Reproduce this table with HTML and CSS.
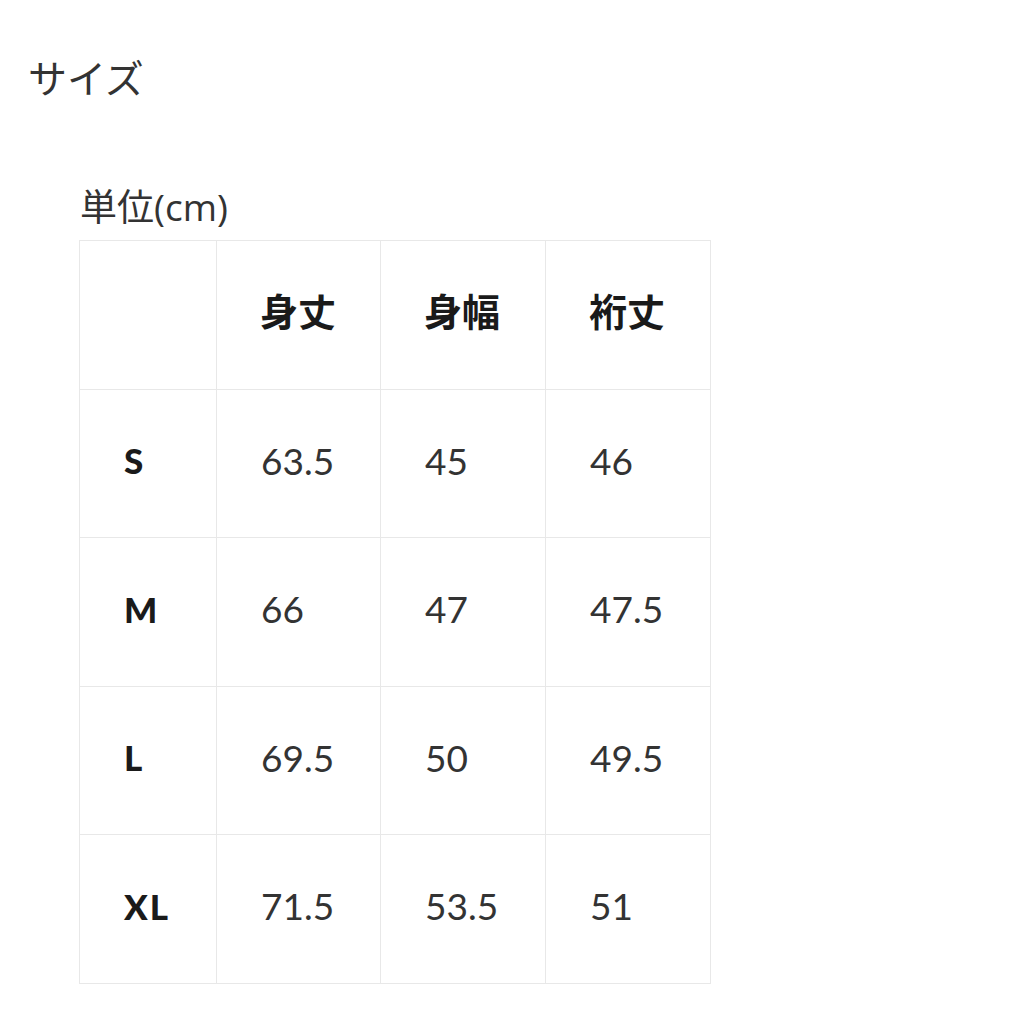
FILE: index.html
```html
<!DOCTYPE html>
<html lang="ja">
<head>
<meta charset="utf-8">
<link rel="stylesheet" href="styles.css">
</head>
<body>
<div class="page">
  <h1 class="title">サイズ</h1>
  <div class="unit">単位(cm)</div>
  <table class="size-table">
    <tr class="head">
      <td></td><td>身丈</td><td>身幅</td><td>裄丈</td>
    </tr>
    <tr><th>S</th><td>63.5</td><td>45</td><td>46</td></tr>
    <tr><th>M</th><td>66</td><td>47</td><td>47.5</td></tr>
    <tr><th>L</th><td>69.5</td><td>50</td><td>49.5</td></tr>
    <tr><th>XL</th><td>71.5</td><td>53.5</td><td>51</td></tr>
  </table>
</div>
</body>
</html>
```
FILE: styles.css
```css
html, body { margin: 0; padding: 0; background: #fff; }
body {
  font-family: Lato, "Noto Sans CJK JP", sans-serif;
  color: #333;
}
.page { padding: 52px 0 0 28px; }
.title {
  margin: 0;
  font-size: 39px;
  font-weight: 400;
  line-height: 48px;
  font-family: "Noto Sans CJK JP", sans-serif;
}
.unit {
  margin: 85px 0 0 52px;
  font-size: 37px;
  line-height: 44px;
  font-family: "Open Sans", "Noto Sans CJK JP", sans-serif;
  color: #333;
}
.size-table {
  margin: 11px 0 0 51px;
  border-collapse: collapse;
}
.size-table td, .size-table th {
  border: 1.5px solid #e8e8e8;
  height: 141.5px;
  padding: 0 0 6px 44px;
  text-align: left;
  vertical-align: middle;
  font-size: 37px;
  font-weight: 400;
  color: #333;
}
.size-table td:nth-child(1), .size-table th { width: 92px; }
.size-table td:nth-child(2) { width: 119px; }
.size-table td:nth-child(3) { width: 120px; }
.size-table td:nth-child(4) { width: 120px; }
.size-table th {
  font-weight: 900;
  color: #1a1a1a;
  font-size: 35px;
  letter-spacing: 2px;
}
.size-table .head td {
  font-family: "Noto Sans CJK JP", sans-serif;
  font-weight: 700;
  font-size: 38px;
  color: #1a1a1a;
  height: 137.5px;
  padding: 0 0 10px 43px;
}
```
